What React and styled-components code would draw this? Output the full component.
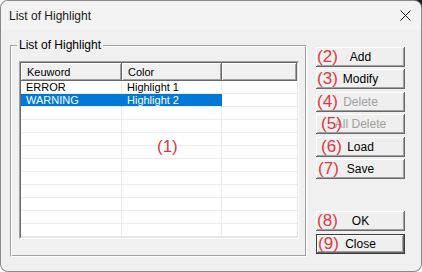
import React from "react";
import styled, { createGlobalStyle } from "styled-components";

const Global = createGlobalStyle`
  html, body { margin: 0; padding: 0; }
  body {
    width: 422px;
    height: 272px;
    overflow: hidden;
    background:
      linear-gradient(to right, #f6f6f6 40px, #1c1c1c 40px) top left / 100% 10px no-repeat,
      #ffffff;
    font-family: "Liberation Sans", Arial, sans-serif;
  }
`;

const Window = styled.div`
  box-sizing: border-box;
  width: 422px;
  height: 272px;
  border: 1px solid rgba(70, 70, 70, 0.6);
  border-radius: 8px;
  overflow: hidden;
  background: #f0f0f0;
  display: flex;
  flex-direction: column;
`;

const TitleBar = styled.div`
  height: 29px;
  flex: none;
  display: flex;
  align-items: center;
  justify-content: space-between;
  padding: 0 10px 0 8px;
  background: #f3f3f3;
`;

const Title = styled.span`
  font-size: 12px;
  color: #1a1a1a;
  padding-top: 1px;
`;

const Client = styled.div`
  flex: 1;
  display: flex;
  align-items: flex-start;
  padding: 15px 0 0 9px;
`;

const GroupBox = styled.div`
  position: relative;
  box-sizing: border-box;
  width: 297px;
  height: 212px;
  padding: 15px 0 0 8px;
  border: 1px solid;
  border-color: #a0a0a0 #ffffff #ffffff #a0a0a0;
  box-shadow: inset 1px 1px #ffffff, inset -1px -1px #a0a0a0;
`;

const Legend = styled.span`
  position: absolute;
  top: -8px;
  left: 6px;
  padding: 0 2px;
  background: #f0f0f0;
  font-size: 12px;
  line-height: 15px;
  color: #000;
`;

const ListView = styled.div`
  position: relative;
  box-sizing: border-box;
  width: 280px;
  height: 178px;
  border: 1px solid;
  border-color: #a0a0a0 #ffffff #ffffff #a0a0a0;
  background: #ffffff;
  overflow: hidden;
`;

const ListInner = styled.div`
  box-sizing: border-box;
  height: 100%;
  border: 1px solid;
  border-color: #696969 #e3e3e3 #e3e3e3 #696969;
`;

const HeaderRow = styled.div`
  display: grid;
  grid-template-columns: 101px 100px 1fr;
  height: 18px;
  background: #f0f0f0;
`;

const HeaderCell = styled.div`
  box-sizing: border-box;
  padding-left: 6px;
  font-size: 11px;
  line-height: 18px;
  color: #000;
  box-shadow: inset -1px -1px #696969, inset 1px 1px #ffffff, inset -2px -2px #a0a0a0;
`;

const Row = styled.div`
  display: grid;
  grid-template-columns: 101px 100px 1fr;
  height: 13px;
`;

const Cell = styled.div`
  box-sizing: border-box;
  padding-left: 5px;
  font-size: 11px;
  line-height: 12px;
  white-space: nowrap;
  border-bottom: 1px solid #ececec;
  border-right: 1px solid ${(p) => (p.$sel ? "#0078d7" : "#ececec")};
  background: ${(p) => (p.$sel ? "#0078d7" : "transparent")};
  color: ${(p) => (p.$sel ? "#ffffff" : "#000000")};
`;

const FillCell = styled.div`
  border-bottom: 1px solid #ececec;
`;

const Note = styled.span`
  position: absolute;
  left: ${(p) => p.$x}px;
  top: ${(p) => p.$y}px;
  font-family: "Liberation Sans", Arial, sans-serif;
  font-size: 17px;
  line-height: 20px;
  color: #db3a42;
  pointer-events: none;
`;

const ButtonColumn = styled.div`
  display: flex;
  flex-direction: column;
  margin: 2px 0 0 9px;
`;

const ButtonStack = styled.div`
  display: flex;
  flex-direction: column;
  gap: ${(p) => p.$gap}px;
  margin-top: ${(p) => p.$top || 0}px;
`;

const Button = styled.button`
  position: relative;
  box-sizing: border-box;
  width: 89px;
  height: 20px;
  margin: 0;
  padding: 0;
  border: ${(p) => (p.$default ? "1px solid #3c3c3c" : "none")};
  background: #efefef;
  font-family: "Liberation Sans", Arial, sans-serif;
  font-size: 12px;
  font-weight: 400;
  line-height: 18px;
  color: ${(p) => (p.disabled ? "#a0a0a0" : "#000000")};
  box-shadow: inset -1px -1px #696969, inset 1px 1px #ffffff, inset -2px -2px #a0a0a0;
  text-align: center;
`;

const BtnNote = styled.span`
  position: absolute;
  left: ${(p) => p.$dx}px;
  top: 50%;
  transform: translateY(-50%);
  font-size: 17px;
  font-weight: 400;
  line-height: 18px;
  color: #db3a42;
`;

const rows = [
  { k: "ERROR", c: "Highlight 1", sel: false },
  { k: "WARNING", c: "Highlight 2", sel: true },
];
const empties = Array.from({ length: 10 });

function Btn({ n, dx = 0, children, ...rest }) {
  return (
    <Button type="button" {...rest}>
      <BtnNote $dx={dx}>({n})</BtnNote>
      {children}
    </Button>
  );
}

export default function App() {
  return (
    <>
      <Global />
      <Window>
        <TitleBar>
          <Title>List of Highlight</Title>
          <svg width="11" height="11" viewBox="0 0 11 11">
            <path d="M0.5 0.5 L10.5 10.5 M10.5 0.5 L0.5 10.5" stroke="#1a1a1a" strokeWidth="1" fill="none" />
          </svg>
        </TitleBar>
        <Client>
          <GroupBox>
            <Legend>List of Highlight</Legend>
            <ListView>
              <ListInner>
                <HeaderRow>
                  <HeaderCell>Keuword</HeaderCell>
                  <HeaderCell>Color</HeaderCell>
                  <HeaderCell />
                </HeaderRow>
                {rows.map((r) => (
                  <Row key={r.k}>
                    <Cell $sel={r.sel}>{r.k}</Cell>
                    <Cell $sel={r.sel}>{r.c}</Cell>
                    <FillCell />
                  </Row>
                ))}
                {empties.map((_, i) => (
                  <Row key={i}>
                    <Cell />
                    <Cell />
                    <FillCell />
                  </Row>
                ))}
              </ListInner>
              <Note $x={137} $y={75}>(1)</Note>
            </ListView>
          </GroupBox>
          <ButtonColumn>
            <ButtonStack $gap={2.4}>
              <Btn n={2} dx={1}>Add</Btn>
              <Btn n={3} dx={1}>Modify</Btn>
              <Btn n={4} dx={1} disabled>Delete</Btn>
              <Btn n={5} dx={5} disabled>All Delete</Btn>
              <Btn n={6} dx={5}>Load</Btn>
              <Btn n={7} dx={2}>Save</Btn>
            </ButtonStack>
            <ButtonStack $gap={3} $top={32}>
              <Btn n={8} dx={1}>OK</Btn>
              <Btn n={9} dx={1} $default>Close</Btn>
            </ButtonStack>
          </ButtonColumn>
        </Client>
      </Window>
    </>
  );
}
